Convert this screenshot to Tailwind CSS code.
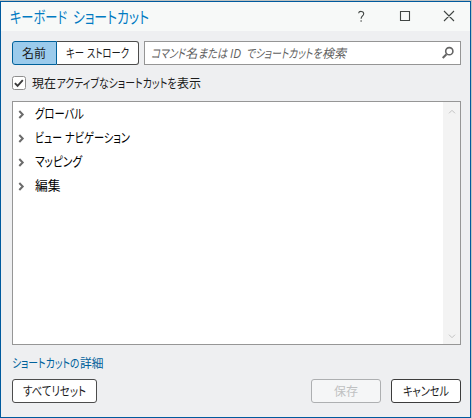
<!DOCTYPE html>
<html lang="ja">
<head>
<meta charset="utf-8">
<title>キーボード ショートカット</title>
<script src="https://cdn.jsdelivr.net/npm/@tailwindcss/browser@4"></script>
</head>
<body class="w-[472px] h-[418px] overflow-hidden bg-[#bfc3c1] pt-px pr-px font-['Noto_Sans_CJK_JP',sans-serif] text-[12.5px] leading-[18px] text-[#1c1c1c] [font-feature-settings:'palt'] [&_text]:fill-current">
<main class="w-[471px] h-[417px] border border-[#005a9e] bg-[#eeeff1] flex flex-col">
  <header class="h-[29px] bg-[#f7f9f8] flex items-center pl-[9px] shrink-0">
    <h1 class="flex text-[16px] text-[#007ac2]"><svg class="w-[139px] h-[24px] overflow-visible"><text y="18" textLength="57" lengthAdjust="spacingAndGlyphs">キーボード</text><text x="63" y="18" textLength="76" lengthAdjust="spacingAndGlyphs">ショートカット</text></svg></h1>
    <svg class="ml-auto mr-[10px] w-[110px] h-[29px]" viewBox="350 2 110 29" fill="none" stroke="#404543" stroke-width="1.1"><path d="M358.6 13.2C358.9 10.8 363.7 10.7 363.7 13.7C363.7 16 361.1 16 361.1 18.8M361.1 20.2v1.6"/><path d="M400.5 11.5h9v9h-9zM444 11l10 10M454 11l-10 10"/></svg>
  </header>
  <section class="flex flex-col pl-[11px] pr-[9px] pt-[10px]">
    <div class="flex h-[24px] gap-[5px]">
      <div class="flex w-[127px]">
        <button class="w-[45px] rounded-l-[3px] border border-[#00619b] bg-[#9bcbec] flex items-center pl-[9px]"><svg class="w-[24px] h-[18px] overflow-visible"><text y="13.5" textLength="24" lengthAdjust="spacingAndGlyphs">名前</text></svg></button>
        <button class="w-[82px] rounded-r-[3px] border border-l-0 border-[#4c4c4c] bg-white flex items-center pl-[9px]"><svg class="w-[63px] h-[18px] overflow-visible"><text y="13.5" textLength="18" lengthAdjust="spacingAndGlyphs">キー</text><text x="21" y="13.5" textLength="42" lengthAdjust="spacingAndGlyphs">ストローク</text></svg></button>
      </div>
      <div class="w-[317px] border border-[#959595] bg-white flex items-center pl-[6px] italic text-[#606060]">
        <svg class="w-[196px] h-[18px] overflow-visible"><text y="13.5"><tspan x="0" textLength="34" lengthAdjust="spacingAndGlyphs">コマンド</tspan><tspan x="34" textLength="12.5" lengthAdjust="spacingAndGlyphs">名</tspan><tspan x="47" textLength="29" lengthAdjust="spacingAndGlyphs">または</tspan><tspan x="79" textLength="11" lengthAdjust="spacingAndGlyphs" class="font-['Open_Sans']">ID</tspan><tspan x="95" textLength="75.5" lengthAdjust="spacingAndGlyphs">でショートカットを</tspan><tspan x="171" textLength="24" lengthAdjust="spacingAndGlyphs">検索</tspan></text></svg>
        <svg class="ml-auto mr-[5px] w-[14px] h-[14px]" viewBox="441 46 14 14" fill="none" stroke="#656565"><circle cx="449.3" cy="51.2" r="3.6" stroke-width="1.6"/><path d="M446.5 54.2l-3.8 3.8" stroke-width="2"/></svg>
      </div>
    </div>
    <label class="flex items-center h-[18px] mt-[9px]">
      <svg class="w-[14px] h-[14px]" viewBox="0 0 14 14" fill="none"><rect x=".5" y=".5" width="13" height="13" rx="2" fill="#fff" stroke="#8e8e8e"/><path d="M2.9 7.1l2.7 2.8 5.2-5.7" stroke="#3b3b3b" stroke-width="1.9"/></svg>
      <svg class="ml-[6px] w-[169px] h-[18px] overflow-visible"><text y="13.5"><tspan x="0" textLength="24" lengthAdjust="spacingAndGlyphs">現在</tspan><tspan x="24.5" textLength="120" lengthAdjust="spacingAndGlyphs">アクティブなショートカットを</tspan><tspan x="145" textLength="24" lengthAdjust="spacingAndGlyphs">表示</tspan></text></svg>
    </label>
    <div class="mt-[9px] h-[244px] border border-[#969696] bg-white flex">
      <ul class="flex-1 text-[13px] text-black">
        <li class="h-[24px] flex items-center"><svg class="w-[7px] h-[9px] ml-[5px] mr-[10px]" viewBox="0 0 7 9" fill="none" stroke="#6b6b6b" stroke-width="2"><path d="M1.3 1l3.4 3.5L1.3 8"/></svg><svg class="w-[100px] h-[18px] overflow-visible"><text y="13" textLength="49" lengthAdjust="spacingAndGlyphs">グローバル</text></svg></li>
        <li class="h-[24px] flex items-center"><svg class="w-[7px] h-[9px] ml-[5px] mr-[10px]" viewBox="0 0 7 9" fill="none" stroke="#6b6b6b" stroke-width="2"><path d="M1.3 1l3.4 3.5L1.3 8"/></svg><svg class="w-[100px] h-[18px] overflow-visible"><text y="13" textLength="27" lengthAdjust="spacingAndGlyphs">ビュー</text><text x="30" y="13" textLength="65" lengthAdjust="spacingAndGlyphs">ナビゲーション</text></svg></li>
        <li class="h-[24px] flex items-center"><svg class="w-[7px] h-[9px] ml-[5px] mr-[10px]" viewBox="0 0 7 9" fill="none" stroke="#6b6b6b" stroke-width="2"><path d="M1.3 1l3.4 3.5L1.3 8"/></svg><svg class="w-[100px] h-[18px] overflow-visible"><text y="13" textLength="47" lengthAdjust="spacingAndGlyphs">マッピング</text></svg></li>
        <li class="h-[24px] flex items-center"><svg class="w-[7px] h-[9px] ml-[5px] mr-[10px]" viewBox="0 0 7 9" fill="none" stroke="#6b6b6b" stroke-width="2"><path d="M1.3 1l3.4 3.5L1.3 8"/></svg><svg class="w-[100px] h-[18px] overflow-visible"><text y="13" textLength="25.5" lengthAdjust="spacingAndGlyphs">編集</text></svg></li>
      </ul>
      <div class="w-[17px] bg-[#f3f3f3] flex flex-col justify-between items-center pt-[7px] pb-[5px]">
        <svg class="w-[8px] h-[5px]" viewBox="0 0 8 5" fill="none" stroke="#c3c3c3"><path d="M1 4.3l3-3 3 3"/></svg>
        <svg class="w-[8px] h-[5px]" viewBox="0 0 8 5" fill="none" stroke="#c3c3c3"><path d="M1 .7l3 3 3-3"/></svg>
      </div>
    </div>
    <a class="flex h-[18px] mt-[9px] text-[#00619b]"><svg class="w-[92px] h-[18px] overflow-visible"><text y="14"><tspan x="0" textLength="67.5" lengthAdjust="spacingAndGlyphs">ショートカットの</tspan><tspan x="68" textLength="23.5" lengthAdjust="spacingAndGlyphs">詳細</tspan></text></svg></a>
    <footer class="mt-[7px] h-[24px] flex">
      <button class="w-[85px] rounded-[3px] border border-[#4c4c4c] bg-white flex items-center pl-[10px]"><svg class="w-[63px] h-[18px] overflow-visible"><text y="13.5" textLength="63" lengthAdjust="spacingAndGlyphs">すべてリセット</text></svg></button>
      <button disabled class="ml-auto w-[70px] rounded-[3px] border border-[#adafb1] bg-[#f5f6f7] text-[#bfc1c2] flex items-center pl-[22px]"><svg class="w-[24px] h-[18px] overflow-visible"><text y="13.5" textLength="24" lengthAdjust="spacingAndGlyphs">保存</text></svg></button>
      <button class="ml-[10px] w-[70px] rounded-[3px] border border-[#3c3c3c] bg-white flex items-center pl-[11px]"><svg class="w-[46px] h-[18px] overflow-visible"><text y="13.5" textLength="46" lengthAdjust="spacingAndGlyphs">キャンセル</text></svg></button>
    </footer>
  </section>
</main>
</body>
</html>
